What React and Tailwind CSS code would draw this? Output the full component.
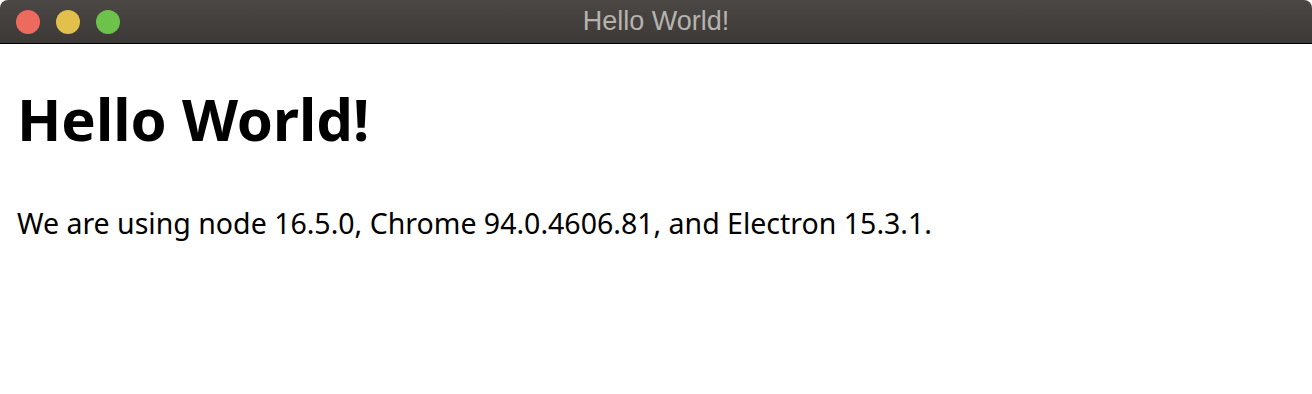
export default function App() {
  return (
    <div className="w-[1312px] h-[394px] bg-white overflow-hidden" style={{ fontFamily: '"Noto Sans", sans-serif' }}>
      <div className="relative h-[44px] rounded-t-[8px] bg-gradient-to-b from-[#4a4744] to-[#3c3936] border-b border-black flex items-center">
        <div className="flex items-center gap-[16px] pl-[16px]">
          <span className="w-[24px] h-[24px] rounded-full bg-[#ec6a5e]" />
          <span className="w-[24px] h-[24px] rounded-full bg-[#e1c04c]" />
          <span className="w-[24px] h-[24px] rounded-full bg-[#6cc24a]" />
        </div>
        <div className="absolute inset-0 flex items-center justify-center text-[27px] text-[#b6b2ae]" style={{ fontFamily: '"Liberation Sans", sans-serif' }}>
          Hello World!
        </div>
      </div>
      <div className="px-[17px]">
        <h1 className="text-[58px] font-bold text-black leading-none mt-[46px]">Hello World!</h1>
        <p className="text-[28.5px] text-black mt-[61px] leading-none">
          We are using node 16.5.0, Chrome 94.0.4606.81, and Electron 15.3.1.
        </p>
      </div>
    </div>
  );
}
